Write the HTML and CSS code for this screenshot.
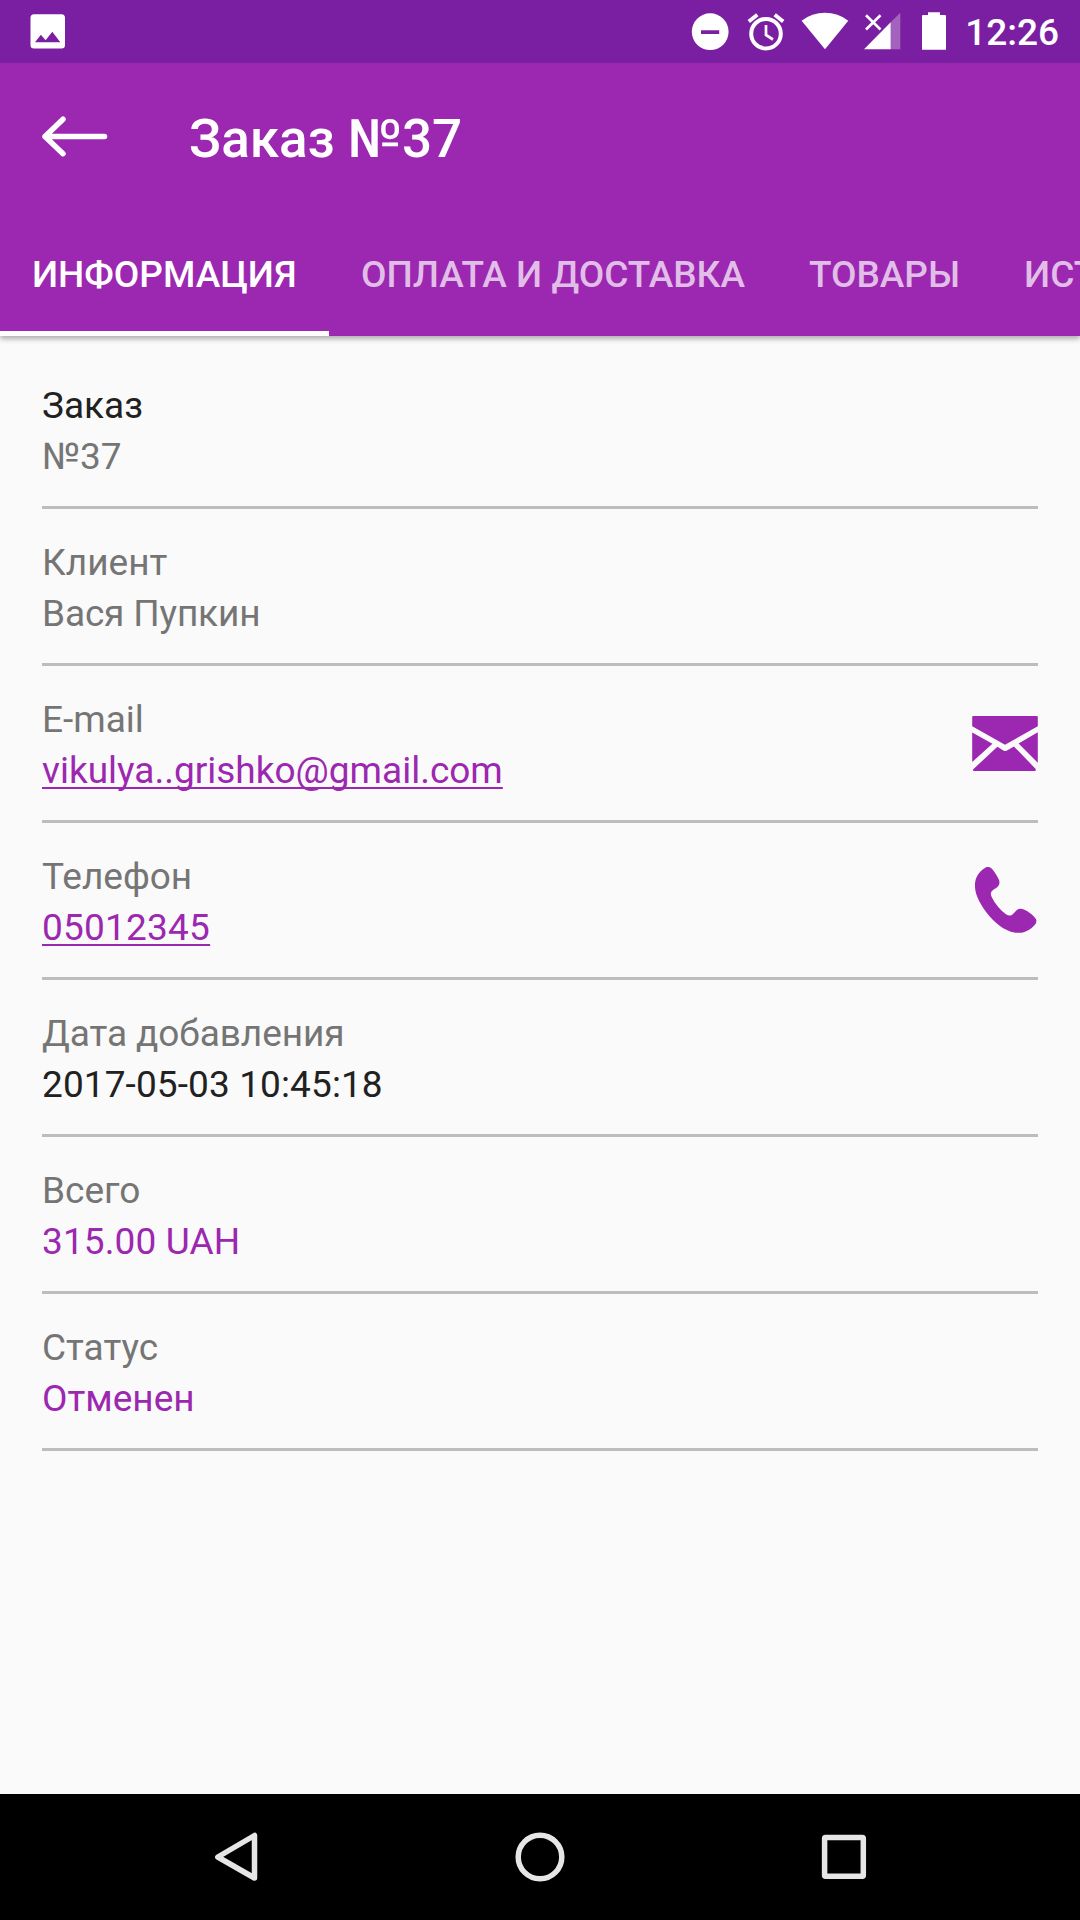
FILE: index.html
```html
<!DOCTYPE html>
<html lang="ru">
<head>
<meta charset="utf-8">
<title>Заказ №37</title>
<link rel="stylesheet" href="styles.css">
</head>
<body>
<div class="screen">
  <header class="header">
    <div class="status-bar">
      <svg class="status-icon" width="36" height="63" viewBox="30 0 36 63"><path fill-rule="evenodd" d="M34 14.2H61.500Q65 14.200 65 17.700V45Q65 48.500 61.500 48.500H34Q30.500 48.500 30.500 45V17.700Q30.500 14.200 34 14.200ZM35 42.300H60.300L52.300 31.700L45.600 40.200L40.900 34.700Z"/></svg>
      <div class="status-right">
        <svg class="status-icon" width="38" height="63" viewBox="691 0 38 63"><path fill-rule="evenodd" d="M710.200 13.300a18.400 18.400 0 1 0 0 36.800a18.400 18.400 0 1 0 0-36.800ZM701 30.200H719.200V34H701Z"/></svg>
        <svg class="status-icon line" width="38" height="63" viewBox="747 0 38 63"><circle cx="766" cy="33.700" r="14.800"/><path d="M766 25V35L773 39.500" stroke-width="2.700"/><path d="M748.800 21.500L757.300 14.700M783.200 21.500L774.700 14.700" stroke-width="3.800"/></svg>
        <svg class="status-icon wifi" width="48" height="63" viewBox="801 0 48 63"><path d="M801.600 20.700Q812 12.800 825 12.800T848.300 20.700L825 49.300Z"/></svg>
        <svg class="status-icon signal" width="37" height="63" viewBox="864 0 37 63"><path d="M900.300 12.700V49.200H890.700V22.300Z" opacity=".3"/><path d="M890.700 22.300V49.200H864Z"/><path class="cross" d="M866 15.200L880.500 29.500M880.500 15.200L866 29.500"/></svg>
        <svg class="status-icon battery" width="26" height="63" viewBox="921 0 26 63"><path d="M928 12.200H940V15H945Q946 15 946 16V49.800H922V16Q922 15 923 15H928Z"/></svg>
        <span class="clock">12:26</span>
      </div>
    </div>
    <div class="toolbar">
      <svg class="back" width="66" height="44" viewBox="42 115 66 44"><path d="M63 119.200L45 136.500L63 153.700M45 136.500H104.500"/></svg>
      <h1 class="title">Заказ №37</h1>
    </div>
    <nav class="tabs">
      <span class="tab active">ИНФОРМАЦИЯ</span>
      <span class="tab">ОПЛАТА И ДОСТАВКА</span>
      <span class="tab">ТОВАРЫ</span>
      <span class="tab">ИСТОРИЯ</span>
    </nav>
  </header>
  <main class="list">
    <div class="row"><div><p class="dark">Заказ</p><p>№37</p></div></div>
    <div class="row"><div><p>Клиент</p><p class="name">Вася Пупкин</p></div></div>
    <div class="row">
      <div><p>E-mail</p><p><a class="link">vikulya..grishko@gmail.com</a></p></div>
      <svg class="row-icon" width="66" height="55" viewBox="96 76 198 166"><path d="M96 79Q96 76 99 76H291Q294 76 294 79V107L195 163L96 107ZM96 126L157 160L96 215ZM294 125L236 159L294 217ZM172 169L190 180Q195 184 201 180L222 168L287 235Q290 242 285 242H101Q96 241 100 236Z"/></svg>
    </div>
    <div class="row">
      <div><p>Телефон</p><p><a class="link digits">05012345</a></p></div>
      <svg class="row-icon" width="66" height="66" viewBox="96 531 198 198"><path d="M145 531C150 531 154 534 159 540C166 549 173 561 177 570C180 578 178 586 172 591C166 596 160 599 156 603C151 608 152 614 155 621C165 641 180 660 198 673C206 678 213 678 219 672C225 667 229 660 236 657C244 654 253 658 261 663C271 669 281 678 287 686C290 690 290 696 287 701C278 714 261 725 245 728C222 731 199 722 180 708C150 685 125 652 112 621C103 600 103 578 109 563C115 549 125 539 136 533C139 531 142 531 145 531Z"/></svg>
    </div>
    <div class="row"><div><p class="date-label">Дата добавления</p><p class="dark date">2017-05-03 10:45:18</p></div></div>
    <div class="row"><div><p>Всего</p><p class="accent date">315.00 UAH</p></div></div>
    <div class="row"><div><p>Статус</p><p class="accent">Отменен</p></div></div>
  </main>
  <footer class="nav-bar">
    <svg width="44" height="52" viewBox="214 1831 44 52"><path d="M254.500 1835.500V1878L217.800 1857Z"/></svg>
    <svg width="52" height="52" viewBox="514 1831 52 52"><circle cx="540" cy="1857" r="21.800"/></svg>
    <svg width="46" height="52" viewBox="821 1831 46 52"><rect x="824.600" y="1837.600" width="38.700" height="38.700" rx="1"/></svg>
  </footer>
</div>
</body>
</html>
```
FILE: styles.css
```css
* { box-sizing: border-box; }

body {
  margin: 0;
  font-family: Roboto, "Noto Sans", sans-serif;
  font-size: 37px;
  color: #757575;
}

h1, p { margin: 0; font-weight: inherit; }
svg { display: block; flex: none; }

.screen {
  display: flex;
  flex-direction: column;
  width: 1080px;
  height: 1920px;
  overflow: hidden;
  background: #fafafa;
}

.header {
  flex: none;
  background: #9c27b0;
  color: #fff;
  font-weight: 500;
  box-shadow: 0 3px 5px rgba(0, 0, 0, 0.3);
}

.status-bar {
  display: flex;
  justify-content: space-between;
  height: 63px;
  padding: 0 21px 0 30px;
  background: #7b1fa2;
}

.status-right { display: flex; }
.status-icon { fill: #fff; }
.line { margin-left: 18px; fill: none; stroke: #fff; stroke-width: 4; }
.wifi { margin-left: 16px; }
.signal { margin-left: 15px; }
.battery { margin: 0 18px 0 20px; }
.cross { stroke: #fff; stroke-width: 2.6; }
.clock { line-height: 66px; }

.toolbar {
  display: flex;
  align-items: center;
  gap: 81px;
  height: 147px;
  padding: 0 42px;
}

.back {
  fill: none;
  stroke: #fff;
  stroke-width: 5.5;
  stroke-linecap: round;
  stroke-linejoin: round;
}

.title {
  padding-top: 4px;
  font-size: 53px;
  line-height: 62px;
}

.tabs { display: flex; height: 126px; overflow: hidden; }

.tab {
  flex: none;
  height: 126px;
  padding: 3px 32px 0;
  line-height: 124px;
  white-space: nowrap;
  color: #e1bee7;
}

.active { width: 329px; color: #fff; border-bottom: 5px solid #fff; }

.list { flex: 1; padding: 16px 42px 0; }

.row {
  display: flex;
  align-items: center;
  justify-content: space-between;
  height: 157px;
  padding-top: 4px;
  border-bottom: 3px solid #bdbdbd;
}

.row p { line-height: 51px; white-space: nowrap; }
.row .row-icon { margin-top: -4px; fill: #9c27b0; }
.row .dark { color: #212121; }
.row .accent, .link { color: #9c27b0; }

.name { letter-spacing: -0.15px; }
.date-label { letter-spacing: -0.08px; }
.date { letter-spacing: 0.11px; }
.digits { letter-spacing: 0.22px; }

.link {
  text-decoration: underline;
  text-decoration-skip-ink: none;
  text-decoration-thickness: 2px;
  text-underline-offset: 4px;
}

.nav-bar {
  display: flex;
  align-items: center;
  justify-content: space-between;
  flex: none;
  height: 126px;
  padding: 0 213px 0 214px;
  background: #000;
}

.nav-bar svg { fill: none; stroke: #e6e6e6; stroke-width: 5.5; stroke-linejoin: round; }
```
